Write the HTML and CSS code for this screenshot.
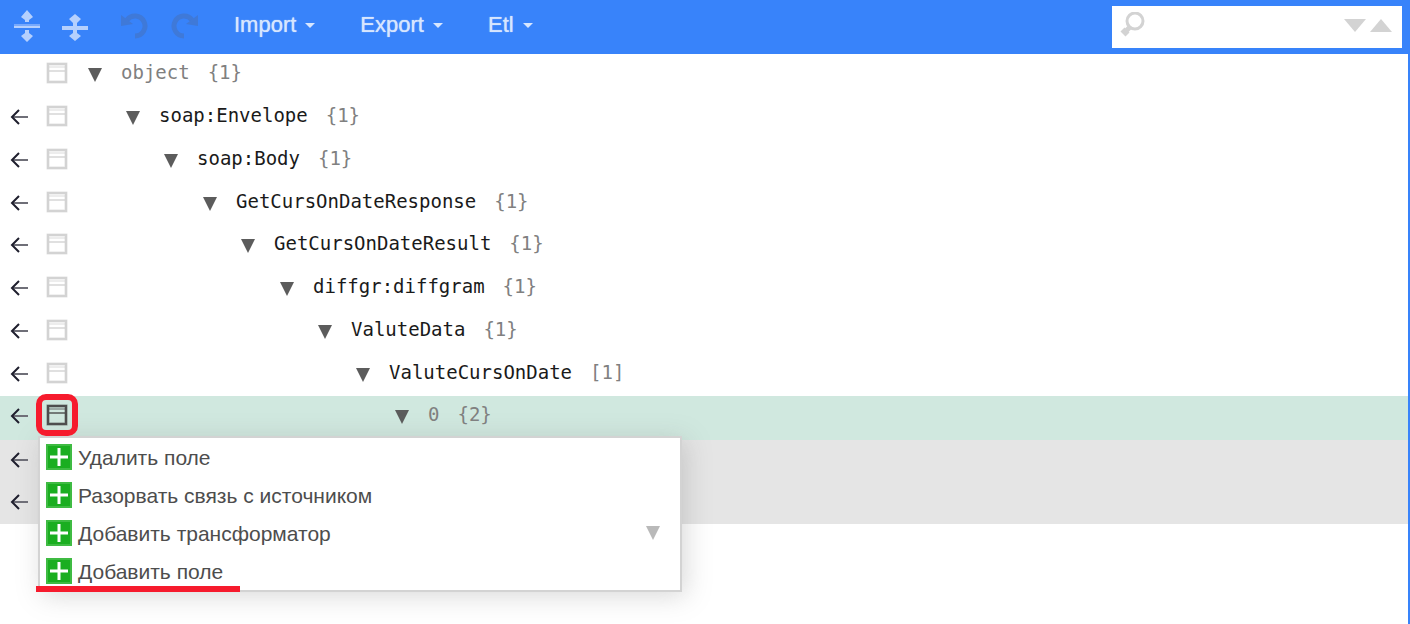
FILE: index.html
```html
<!DOCTYPE html>
<html lang="ru">
<head>
    <meta charset="UTF-8">
    <meta name="viewport" content="width=device-width, initial-scale=1.0">
    <title>JSON Editor</title>
    <link rel="stylesheet" href="styles.css">
</head>
<body>
    <!-- shared icons -->
    <svg class="icon-defs" aria-hidden="true">
        <symbol id="icon-arrow" viewBox="0 0 20 20">
            <path d="M4 10h15" stroke="#6f6f78" stroke-width="2"/>
            <path d="M10 3l-7 7 7 7" fill="none" stroke="#1f1f2e" stroke-width="2"/>
        </symbol>
        <symbol id="icon-field" viewBox="0 0 22 22">
            <path d="M2 2h18v18H2z" fill="none" stroke="currentColor" stroke-width="3" opacity=".6"/>
            <path d="M2 2h18v18H2z" fill="none" stroke="currentColor" stroke-width="2"/>
            <path d="M3 5h16" stroke="currentColor" stroke-width="2" opacity=".4"/>
            <path d="M3 9h16" stroke="currentColor" stroke-width="2" opacity=".7"/>
        </symbol>
        <symbol id="icon-down" viewBox="0 0 14 14">
            <path d="M0 0h14L7 14z" fill="currentColor"/>
        </symbol>
        <symbol id="icon-plus" viewBox="0 0 26 26">
            <path d="M0 0h26v26H0z" fill="#3fbb43"/>
            <path d="M2 2h22v22H2z" fill="#1aae20"/>
            <path d="M4 13h18M13 4v18" stroke="#fff" stroke-width="3"/>
        </symbol>
    </svg>

    <div class="editor">
        <div class="toolbar">
            <button class="tool-button" title="Expand all">
                <svg width="28" height="34" viewBox="0 0 28 34"><path d="M1 14h26v4H1z" opacity=".5"/><path d="M1 16h26v2H1zM14 0l6 7-4 3v2h-4v-2L8 7zM14 32l6-6-4-3v-3h-4v3l-4 3z"/></svg>
            </button>
            <button class="tool-button" title="Collapse all">
                <svg width="28" height="34" viewBox="0 0 28 34"><path d="M1 16h26v4H1zM14 4l6 5-4 4v10l4 3-6 5-6-5 4-3V13L8 9z"/></svg>
            </button>
            <button class="tool-button history" title="Undo" disabled>
                <svg width="28" height="28" viewBox="0 0 28 28"><path d="M7 7a10 10 0 1 1 8 16" fill="none" stroke="#3f79d8" stroke-width="5"/><path d="M1 2v11l12-2z"/></svg>
            </button>
            <button class="tool-button history" title="Redo" disabled>
                <svg width="28" height="28" viewBox="0 0 28 28"><path d="M21 7a10 10 0 1 0-8 16" fill="none" stroke="#3f79d8" stroke-width="5"/><path d="M27 2v11l-12-2z"/></svg>
            </button>
            <button class="menu-button">Import <span class="caret"></span></button>
            <button class="menu-button">Export <span class="caret"></span></button>
            <button class="menu-button">Etl <span class="caret"></span></button>

            <div class="search">
                <svg width="26" height="26" viewBox="0 0 26 26"><circle cx="15" cy="9" r="8" fill="none" stroke="#d3d3d3" stroke-width="3"/><path d="M10 15l-4 4" stroke="#d3d3d3" stroke-width="5"/><path d="M7 18l-4 4" stroke="#d3d3d3" stroke-width="7"/></svg>
                <input type="text" aria-label="Search">
                <button class="search-next" title="Next result"></button>
                <button class="search-previous" title="Previous result"></button>
            </div>
        </div>

        <div class="tree">
            <div class="row">
                <span class="link"></span>
                <button class="field-menu" title="Actions"><svg><use href="#icon-field"/></svg></button>
                <button class="toggle" title="Collapse"><svg><use href="#icon-down"/></svg></button>
                <span class="name readonly">object</span><span class="count">{1}</span>
            </div>
            <div class="row level-1">
                <span class="link"><svg><use href="#icon-arrow"/></svg></span>
                <button class="field-menu" title="Actions"><svg><use href="#icon-field"/></svg></button>
                <button class="toggle" title="Collapse"><svg><use href="#icon-down"/></svg></button>
                <span class="name">soap:Envelope</span><span class="count">{1}</span>
            </div>
            <div class="row level-2">
                <span class="link"><svg><use href="#icon-arrow"/></svg></span>
                <button class="field-menu" title="Actions"><svg><use href="#icon-field"/></svg></button>
                <button class="toggle" title="Collapse"><svg><use href="#icon-down"/></svg></button>
                <span class="name">soap:Body</span><span class="count">{1}</span>
            </div>
            <div class="row level-3">
                <span class="link"><svg><use href="#icon-arrow"/></svg></span>
                <button class="field-menu" title="Actions"><svg><use href="#icon-field"/></svg></button>
                <button class="toggle" title="Collapse"><svg><use href="#icon-down"/></svg></button>
                <span class="name">GetCursOnDateResponse</span><span class="count">{1}</span>
            </div>
            <div class="row level-4">
                <span class="link"><svg><use href="#icon-arrow"/></svg></span>
                <button class="field-menu" title="Actions"><svg><use href="#icon-field"/></svg></button>
                <button class="toggle" title="Collapse"><svg><use href="#icon-down"/></svg></button>
                <span class="name">GetCursOnDateResult</span><span class="count">{1}</span>
            </div>
            <div class="row level-5">
                <span class="link"><svg><use href="#icon-arrow"/></svg></span>
                <button class="field-menu" title="Actions"><svg><use href="#icon-field"/></svg></button>
                <button class="toggle" title="Collapse"><svg><use href="#icon-down"/></svg></button>
                <span class="name">diffgr:diffgram</span><span class="count">{1}</span>
            </div>
            <div class="row level-6">
                <span class="link"><svg><use href="#icon-arrow"/></svg></span>
                <button class="field-menu" title="Actions"><svg><use href="#icon-field"/></svg></button>
                <button class="toggle" title="Collapse"><svg><use href="#icon-down"/></svg></button>
                <span class="name">ValuteData</span><span class="count">{1}</span>
            </div>
            <div class="row level-7">
                <span class="link"><svg><use href="#icon-arrow"/></svg></span>
                <button class="field-menu" title="Actions"><svg><use href="#icon-field"/></svg></button>
                <button class="toggle" title="Collapse"><svg><use href="#icon-down"/></svg></button>
                <span class="name">ValuteCursOnDate</span><span class="count">[1]</span>
            </div>
            <div class="row level-8 selected">
                <span class="link"><svg><use href="#icon-arrow"/></svg></span>
                <button class="field-menu marked" title="Actions"><svg><use href="#icon-field"/></svg></button>
                <button class="toggle" title="Collapse"><svg><use href="#icon-down"/></svg></button>
                <span class="name readonly">0</span><span class="count">{2}</span>

                <div class="context-menu">
                    <button class="menu-item"><svg><use href="#icon-plus"/></svg><span>Удалить поле</span></button>
                    <button class="menu-item"><svg><use href="#icon-plus"/></svg><span>Разорвать связь с источником</span></button>
                    <button class="menu-item"><svg><use href="#icon-plus"/></svg><span>Добавить трансформатор</span><svg class="expand"><use href="#icon-down"/></svg></button>
                    <button class="menu-item underlined"><svg><use href="#icon-plus"/></svg><span>Добавить поле</span></button>
                </div>
            </div>
            <div class="row child">
                <span class="link"><svg><use href="#icon-arrow"/></svg></span>
            </div>
            <div class="row child">
                <span class="link"><svg><use href="#icon-arrow"/></svg></span>
            </div>
        </div>
    </div>
</body>
</html>
```
FILE: styles.css
```css
*,
*::after {
    box-sizing: border-box;
}
body {
    margin: 0;
    background: #fff;
    font-family: "Liberation Sans", Arial, sans-serif;
}
button {
    margin: 0;
    padding: 0;
    border: none;
    background: none;
    font-family: inherit;
    cursor: pointer;
}
svg {
    display: block;
    flex: none;
}
.icon-defs {
    display: none;
}
.editor {
    min-height: 100vh;
    border-right: 2px solid #3883fa;
}

/* toolbar */
.toolbar {
    display: flex;
    align-items: center;
    height: 54px;
    padding: 0 6px 0 13px;
    background: #3883fa;
}
.tool-button {
    width: 28px;
    margin-right: 20px;
}
.tool-button svg {
    fill: #b5d0fd;
}
.tool-button.history {
    width: 40px;
    margin: 0 0 0 11px;
}
.tool-button.history svg {
    fill: #3f79d8;
}
.menu-button {
    display: flex;
    align-items: center;
    margin-left: 23px;
    margin-right: 22px;
    padding-bottom: 4px;
    color: #d7e6fe;
    font-size: 22px;
    line-height: 26px;
    text-shadow: 0 0 1px #d7e6fe;
}
.caret {
    margin-left: 9px;
    border: 5px solid transparent;
    border-top-color: #d7e6fe;
    border-bottom: none;
}
.search {
    display: flex;
    align-items: center;
    width: 290px;
    height: 42px;
    margin-left: auto;
    padding: 0 10px 4px 8px;
    background: #fff;
}
.search input {
    flex: 1;
    min-width: 0;
    border: none;
    outline: none;
    font-size: 21px;
}
.search-next,
.search-previous {
    border: 11px solid transparent;
}
.search-next {
    margin-right: 4px;
    border-top: 13px solid #d3d3d3;
    border-bottom: none;
}
.search-previous {
    border-bottom: 13px solid #d3d3d3;
    border-top: none;
}

/* tree */
.row {
    position: relative;
    display: flex;
    align-items: flex-start;
    height: 43px;
    padding: 8px 0 0 9px;
    font-family: "DejaVu Sans Mono", Consolas, monospace;
    font-size: 19px;
    line-height: 21px;
}
.row:nth-child(4n),
.row.child {
    height: 42px;
}
.row.selected {
    height: 44px;
    background: #d0e8df;
}
.row.child {
    background: #e5e5e5;
}
.link {
    width: 37px;
    padding-top: 2px;
}
.link svg {
    width: 20px;
    height: 20px;
}
.field-menu {
    position: relative;
    color: #d3d3d3;
}
.field-menu svg {
    width: 22px;
    height: 22px;
}
.selected .field-menu {
    color: #4d4d4d;
}
.toggle {
    margin-left: 20px;
    padding-top: 6px;
    color: #5c5c5c;
}
.toggle svg {
    width: 14px;
    height: 14px;
}
.level-1 .toggle { margin-left: 58px; }
.level-2 .toggle { margin-left: 96px; }
.level-3 .toggle { margin-left: 135px; }
.level-4 .toggle { margin-left: 173px; }
.level-5 .toggle { margin-left: 212px; }
.level-6 .toggle { margin-left: 250px; }
.level-7 .toggle { margin-left: 288px; }
.level-8 .toggle { margin-left: 327px; }
.name {
    margin-left: 19px;
    color: #1a1a1a;
}
.count {
    margin-left: 18px;
}
.name.readonly,
.count {
    color: #808080;
}

/* context menu */
.context-menu {
    position: absolute;
    top: 40px;
    left: 38px;
    z-index: 1;
    width: 644px;
    background: #fff;
    border: 2px solid #d3d3d3;
    box-shadow: 4px 4px 24px rgba(128, 128, 128, 0.3);
}
.menu-item {
    position: relative;
    display: flex;
    align-items: center;
    width: 100%;
    height: 38px;
    padding-left: 6px;
    color: #4d4d4d;
    font-family: "Liberation Sans", Arial, sans-serif;
    font-size: 21px;
    line-height: 26px;
}
.menu-item span {
    padding-top: 2px;
}
.menu-item svg {
    width: 26px;
    height: 26px;
    margin-right: 6px;
}
.menu-item .expand {
    width: 14px;
    height: 14px;
    margin-left: auto;
    margin-right: 20px;
    color: #b9b9b9;
}

/* red marks */
.marked::after {
    content: "";
    position: absolute;
    top: -10px;
    left: -10px;
    z-index: 2;
    width: 42px;
    height: 42px;
    border: 6px solid #f61b2d;
    border-radius: 10px;
}
.underlined::after {
    content: "";
    position: absolute;
    left: -4px;
    bottom: -2px;
    width: 204px;
    height: 6px;
    background: #f61b2d;
}
```
